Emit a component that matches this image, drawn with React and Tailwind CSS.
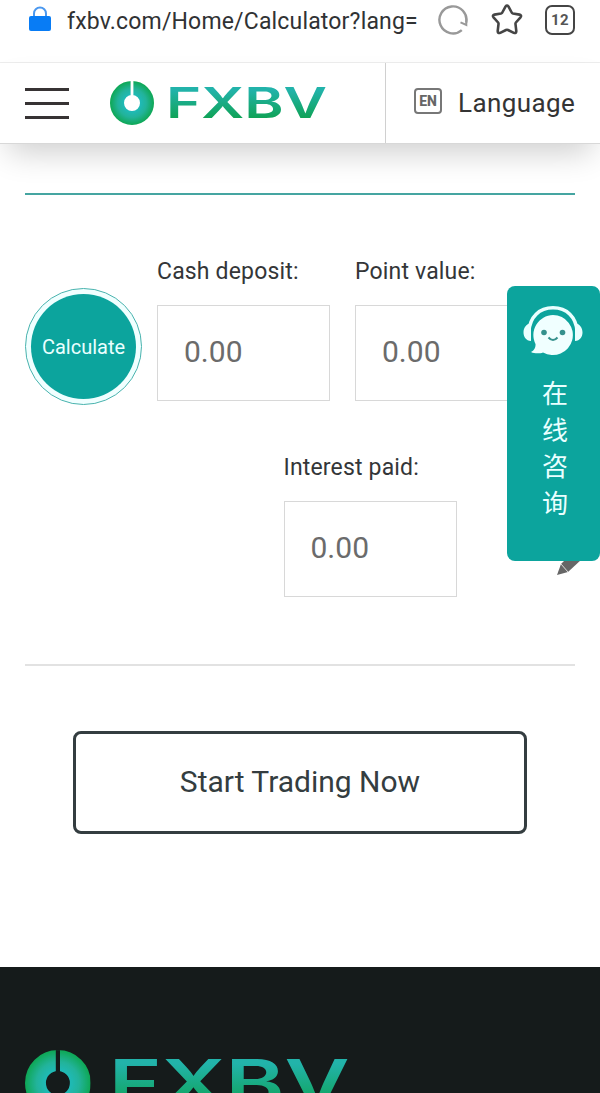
import React from 'react';

const Logo = ({ id, className }) => (
    <svg viewBox="0 0 216 44" className={className} role="img" aria-label="FXBV">
        <defs>
            <radialGradient id={`${id}-ring`} gradientUnits="userSpaceOnUse" cx="22" cy="22" r="22">
                <stop offset="0.4" stopColor="#1fb9b4" />
                <stop offset="0.65" stopColor="#22b39a" />
                <stop offset="0.98" stopColor="#0fa858" />
            </radialGradient>
            <linearGradient id={`${id}-word`} gradientUnits="userSpaceOnUse" x1="0" y1="6" x2="0" y2="38">
                <stop offset="0.1" stopColor="#22b3aa" />
                <stop offset="1" stopColor="#0fa254" />
            </linearGradient>
            <mask id={`${id}-slot`} maskUnits="userSpaceOnUse" x="0" y="0" width="44" height="44">
                <rect width="44" height="44" fill="#fff" />
                <rect x="20.6" y="0" width="2.8" height="16" fill="#000" />
            </mask>
        </defs>
        <circle cx="22" cy="22" r="15" fill="none" stroke={`url(#${id}-ring)`} strokeWidth="14" mask={`url(#${id}-slot)`} />
        <text x="56" y="37" textLength="161" lengthAdjust="spacingAndGlyphs" fontSize="42.5" fontWeight="600" fill={`url(#${id}-word)`} fontFamily="Inter, sans-serif">FXBV</text>
    </svg>
);

const BrowserBar = () => (
    <div className="h-[63px] border-b border-[#ededed] flex items-start pl-[28px] pr-[25px]">
        <svg viewBox="0 0 24 26" className="w-6 h-[26px] mt-[6px] shrink-0">
            <path d="M6 11V7.5a6 6 0 0 1 12 0V11" fill="none" stroke="#4b98ef" strokeWidth="2" />
            <rect x="1" y="10" width="22" height="15" rx="2" fill="#087cf5" />
        </svg>
        <span className="ml-[15px] mt-[7px] w-[356px] text-[23px] leading-[30px] tracking-[0.17px] text-[#303234] whitespace-nowrap">fxbv.com/Home/Calculator?lang=</span>
        <svg viewBox="0 0 32 32" className="w-8 h-8 ml-[14px] mt-1 shrink-0" fill="none" stroke="#999" strokeWidth="2.4">
            <path d="M24.8 26.1A13.5 13.5 0 1 1 29.2 18.5" />
            <path d="M29.3 14.5V21L23.5 18.3" strokeWidth="2" />
        </svg>
        <svg viewBox="0 0 32 32" className="w-8 h-8 ml-[22px] mt-1 shrink-0" fill="none" stroke="#454545" strokeWidth="2.6" strokeLinejoin="round">
            <path d="M14.6 2.4Q16 .5 17.4 2.4L20.7 8.5Q21 9.2 22 9.5L28.5 10.6Q31 11.3 29.5 13.3L24.9 18.5Q24.3 19.2 24.5 20.1L25.3 27.2Q25.2 29.7 22.8 28.8L17 26Q16 25.6 15 26L9.2 28.8Q6.8 29.7 6.7 27.2L7.5 20.1Q7.7 19.2 7.1 18.5L2.5 13.3Q1 11.3 3.5 10.6L10 9.5Q11 9.2 11.3 8.5Z" />
        </svg>
        <div className="ml-auto mt-[5px] w-[30px] h-[30px] rounded-[7px] border-2 border-[#454545] flex items-center justify-center text-[15px] leading-none tracking-[0.5px] font-bold text-[#555]">12</div>
    </div>
);

const Header = () => (
    <header className="relative h-[81px] bg-white border-b border-[#d8d8d8] flex shadow-[0_16px_32px_-8px_rgba(0,0,0,0.2)]">
        <div className="flex-1 flex items-center pl-[25px]">
            <div className="w-[44px] h-[31px] flex flex-col justify-between">
                <div className="h-[3px] bg-[#373334]"></div>
                <div className="h-[3px] bg-[#373334]"></div>
                <div className="h-[3px] bg-[#373334]"></div>
            </div>
            <Logo id="header" className="w-[216px] h-[44px] ml-[41px] mb-[1px] overflow-visible" />
        </div>
        <div className="w-[215px] border-l border-[#d0d0d0] flex items-center pl-[28px]">
            <div className="w-[28px] h-[26px] mb-[5px] rounded-[4px] border-2 border-[#777] flex items-center justify-center text-[14px] leading-none font-extrabold text-[#666] shrink-0">EN</div>
            <span className="ml-4 text-[26px] leading-[32px] tracking-[0.4px] text-[#343434]">Language</span>
        </div>
    </header>
);

const Field = ({ label }) => (
    <div className="w-[173px]">
        <div className="h-[28px] text-[23px] leading-[30px] tracking-[0.17px] text-[#343638] whitespace-nowrap">{label}</div>
        <div className="mt-[20px] h-[96px] border border-[#d8d8d8] pl-[26px] pb-[3px] flex items-center text-[30px] text-[#6b6b6b]">0.00</div>
    </div>
);

const ChatWidget = () => (
    <div className="absolute top-[286px] right-0 w-[93px] h-[275px]">
        {/* Edit pencil, mostly hidden behind the panel */}
        <svg viewBox="0 0 28 28" className="absolute left-[50px] top-[262px] w-7 h-7">
            <path d="M0 27L4 16L17 3L25 11L11 24Z" fill="#666" />
            <path d="M4 16L11 24" stroke="#ddd" strokeWidth="1" />
        </svg>
        <div className="relative h-full rounded-[8px] bg-[#0ca49d] flex flex-col items-center">
            <svg viewBox="0 0 62 52" className="w-[62px] h-[52px] mt-[19px] mr-[2px]">
                <path d="M7 26C8 12 17 2.8 31 2.8S54 12 55 26" fill="none" stroke="#eaffff" strokeWidth="3.5" />
                <path d="M9 18C-1 20-1 35 9 36ZM53 18C63 20 63 35 53 36Z" fill="#eaffff" />
                <path d="M31 10A20 20 0 1 1 21 47.4C18 48.5 13 49 9 47Q14 44 13.5 39A20 20 0 0 1 31 10Z" fill="#f0ffff" />
                <circle cx="22" cy="27.5" r="2.8" fill="#35918d" />
                <circle cx="40.5" cy="27.5" r="2.8" fill="#35918d" />
                <path d="M26.5 32.5Q31 37.5 35.5 32.5" fill="none" stroke="#35918d" strokeWidth="2" />
            </svg>
            <div className="mt-[17px] ml-[3px] w-[27px] text-[26px] leading-[36.7px] text-[#e9ffff] text-center font-['Noto_Sans_CJK_SC',sans-serif]">
                <div>在</div>
                <div>线</div>
                <div>咨</div>
                <div>询</div>
            </div>
        </div>
    </div>
);

const App = () => {
    return (
        <div className="relative w-[600px] h-[1093px] overflow-hidden bg-white font-['Roboto',sans-serif]">
            <BrowserBar />
            <Header />

            <main className="h-[823px] px-[25px] pt-[49px]">
                <div className="h-[2px] bg-[#45a5a1]"></div>

                <div className="mt-[62px] flex items-start">
                    <button className="mt-[31px] w-[117px] h-[117px] rounded-full border-[1.5px] border-[#49b3ae] bg-[#f0ffff] p-[5px] shrink-0">
                        <span className="w-full h-full rounded-full bg-[#0ca49d] flex items-center justify-center text-[20px] text-[#eaffff]">Calculate</span>
                    </button>
                    <div className="ml-[15px] flex gap-[25px]">
                        <Field label="Cash deposit:" />
                        <Field label="Point value:" />
                    </div>
                </div>
                <div className="mt-[48px] pl-[258.5px]">
                    <Field label="Interest paid:" />
                </div>

                <div className="mt-[67px] h-[2px] bg-[#e2e2e2]"></div>

                <button className="mt-[65px] mx-auto w-[454px] h-[103px] rounded-[8px] border-[3px] border-[#343d40] pb-[2px] flex items-center justify-center text-[30px] text-[#343d40]">
                    Start Trading Now
                </button>
            </main>

            <footer className="h-[126px] bg-[#151b1b] px-[25px] pt-[83px] overflow-hidden">
                <Logo id="footer" className="w-[323px] h-[66px]" />
            </footer>

            <ChatWidget />
        </div>
    );
};

export default App;
